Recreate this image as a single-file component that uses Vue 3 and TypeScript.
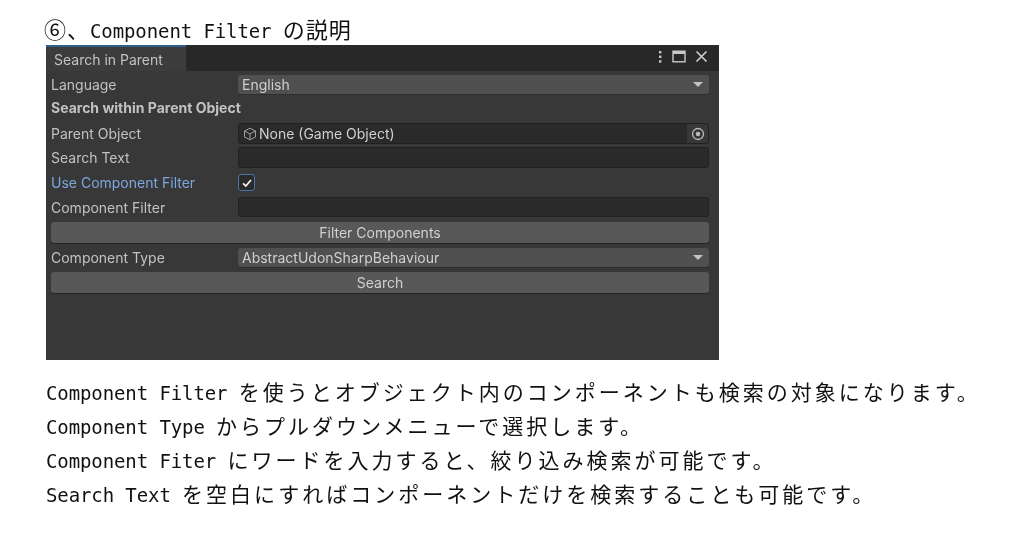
<script setup lang="ts">
interface Run { t: string; latin: boolean }
const lines: Run[][] = [
  [{ t: 'Component Filter ', latin: true }, { t: 'を使うとオブジェクト内のコンポーネントも検索の対象になります。', latin: false }],
  [{ t: 'Component Type ', latin: true }, { t: 'からプルダウンメニューで選択します。', latin: false }],
  [{ t: 'Component Fiter ', latin: true }, { t: 'にワードを入力すると、絞り込み検索が可能です。', latin: false }],
  [{ t: 'Search Text ', latin: true }, { t: 'を空白にすればコンポーネントだけを検索することも可能です。', latin: false }],
]
</script>

<template>
  <div class="page">
    <h1 class="title"><span class="jp">⑥、</span><span class="latin">Component Filter </span><span class="jp">の説明</span></h1>
    <section class="window">
      <header class="tabbar">
        <div class="tab">Search in Parent</div>
        <div class="tools">
          <svg width="6" height="14" viewBox="0 0 6 14"><g fill="#c8c8c8"><rect x="2" y="1" width="2.4" height="2.4"/><rect x="2" y="5.6" width="2.4" height="2.4"/><rect x="2" y="10.2" width="2.4" height="2.4"/></g></svg>
          <svg width="14" height="13" viewBox="0 0 14 13"><rect x="1" y="1.2" width="12" height="10.6" fill="none" stroke="#c8c8c8" stroke-width="1.4"/><rect x="1" y="1" width="12" height="3" fill="#c8c8c8"/></svg>
          <svg width="13" height="13" viewBox="0 0 13 13"><path d="M1.5 1.5 11.5 11.5M11.5 1.5 1.5 11.5" stroke="#d0d0d0" stroke-width="1.6" fill="none"/></svg>
        </div>
      </header>
      <div class="form">
        <div class="row r-language">
          <label>Language</label>
          <div class="drop">English<i class="arrow"></i></div>
        </div>
        <div class="heading">Search within Parent Object</div>
        <div class="row r-parent">
          <label>Parent Object</label>
          <div class="field object">
            <svg class="cube" width="14" height="14" viewBox="0 0 14 14"><g fill="none" stroke="#a0a0a0" stroke-width="1"><path d="M7 1.2 12.5 4v6L7 12.8 1.5 10V4Z"/><path d="M1.5 4 7 7l5.500-3M7 7v5.800"/></g></svg>
            <span>None (Game Object)</span>
            <div class="picker"><svg width="14" height="14" viewBox="0 0 14 14"><circle cx="7" cy="7" r="5.500" fill="none" stroke="#bcbcbc" stroke-width="1.300"/><circle cx="7" cy="7" r="2.200" fill="#bcbcbc"/></svg></div>
          </div>
        </div>
        <div class="row r-text">
          <label>Search Text</label>
          <div class="field"></div>
        </div>
        <div class="row r-check">
          <label class="blue">Use Component Filter</label>
          <div class="check"><svg width="12" height="12" viewBox="0 0 12 12"><path d="M2 6.400 4.800 9 10 3" fill="none" stroke="#f0f0f0" stroke-width="1.800"/></svg></div>
        </div>
        <div class="row r-filter">
          <label>Component Filter</label>
          <div class="field"></div>
        </div>
        <button class="btn b-filter" type="button">Filter Components</button>
        <div class="row r-type">
          <label>Component Type</label>
          <div class="drop">AbstractUdonSharpBehaviour<i class="arrow"></i></div>
        </div>
        <button class="btn b-search" type="button">Search</button>
      </div>
    </section>
    <div class="notes">
      <p v-for="(line, i) in lines" :key="i"><span v-for="(run, j) in line" :key="j" :class="run.latin ? 'latin' : 'jp'">{{ run.t }}</span></p>
    </div>
  </div>
</template>

<style scoped>
.page { width: 1024px; height: 542px; background: #fff; overflow: hidden; color: #111; box-sizing: border-box; padding-top: 13px; }
.title { margin: 0 0 0 44px; height: 32px; font-weight: 400; font-size: 22px; line-height: 30px; white-space: pre; filter: blur(.35px); }
.latin { font-family: "DejaVu Sans Mono", monospace; font-size: 19px; letter-spacing: -.1px; white-space: pre; }
.jp { font-family: "Noto Sans CJK JP", sans-serif; font-size: 21px; letter-spacing: 3px; }
.title .jp { letter-spacing: 1px; font-size: 22px; }
.window { margin-left: 46px; width: 673px; height: 315px; background: #383838; font-family: Inter, "Liberation Sans", sans-serif; font-size: 14px; color: #c2c2c2; filter: blur(.45px); }
.tabbar { height: 26px; background: #282828; display: flex; justify-content: space-between; }
.tab { width: 140px; box-sizing: border-box; height: 26px; background: #3c3c3c; border-top: 2px solid #2f5f8c; padding-left: 8px; line-height: 26px; }
.tools { display: flex; align-items: center; gap: 9px; padding-right: 11px; padding-bottom: 3px; }
.form { padding: 0 10px 0 5px; display: flex; flex-direction: column; }
.row { display: grid; grid-template-columns: 187px 1fr; align-items: center; }
.row label { white-space: nowrap; }
.blue { color: #7ca6dd; }
.r-language { margin-top: 4px; height: 19px; }
.heading { margin-top: 3px; height: 23px; line-height: 22px; font-weight: 700; }
.r-parent { margin-top: 3px; height: 21px; }
.r-text { margin-top: 3px; height: 21px; }
.r-check { margin-top: 6px; height: 17px; }
.r-filter { margin-top: 6px; height: 20px; }
.r-type { margin-top: 5px; height: 19px; }
.drop { position: relative; height: 100%; box-sizing: border-box; background: #505050; border-radius: 3px; padding-left: 4px; display: flex; align-items: center; box-shadow: 0 1px 0 #2e2e2e; color: #cfcfcf; }
.arrow { position: absolute; right: 6px; top: 7px; width: 0; height: 0; border-left: 5px solid transparent; border-right: 5px solid transparent; border-top: 5px solid #c4c4c4; }
.field { height: 100%; box-sizing: border-box; background: #2a2a2a; border: 1px solid #212121; border-radius: 3px; }
.object { position: relative; display: flex; align-items: center; gap: 2px; padding-left: 4px; color: #cfcfcf; }
.picker { position: absolute; right: 0; top: 0; bottom: 0; width: 21px; background: #383838; display: flex; align-items: center; justify-content: center; border-radius: 0 3px 3px 0; }
.check { width: 17px; height: 17px; box-sizing: border-box; background: #2a2a2a; border: 1px solid #4a75a8; border-radius: 3px; display: flex; align-items: center; justify-content: center; }
.btn { display: block; width: 100%; border: 0; font: inherit; color: #d0d0d0; background: #585858; border-radius: 3px; box-shadow: 0 1px 0 #232323; padding: 0; }
.b-filter { margin-top: 5px; height: 21px; }
.b-search { margin-top: 5px; height: 21px; }
.notes { margin: 14px 0 0 46px; filter: blur(.35px); }
.notes p { margin: 0; height: 34px; line-height: 34px; white-space: pre; }
</style>
